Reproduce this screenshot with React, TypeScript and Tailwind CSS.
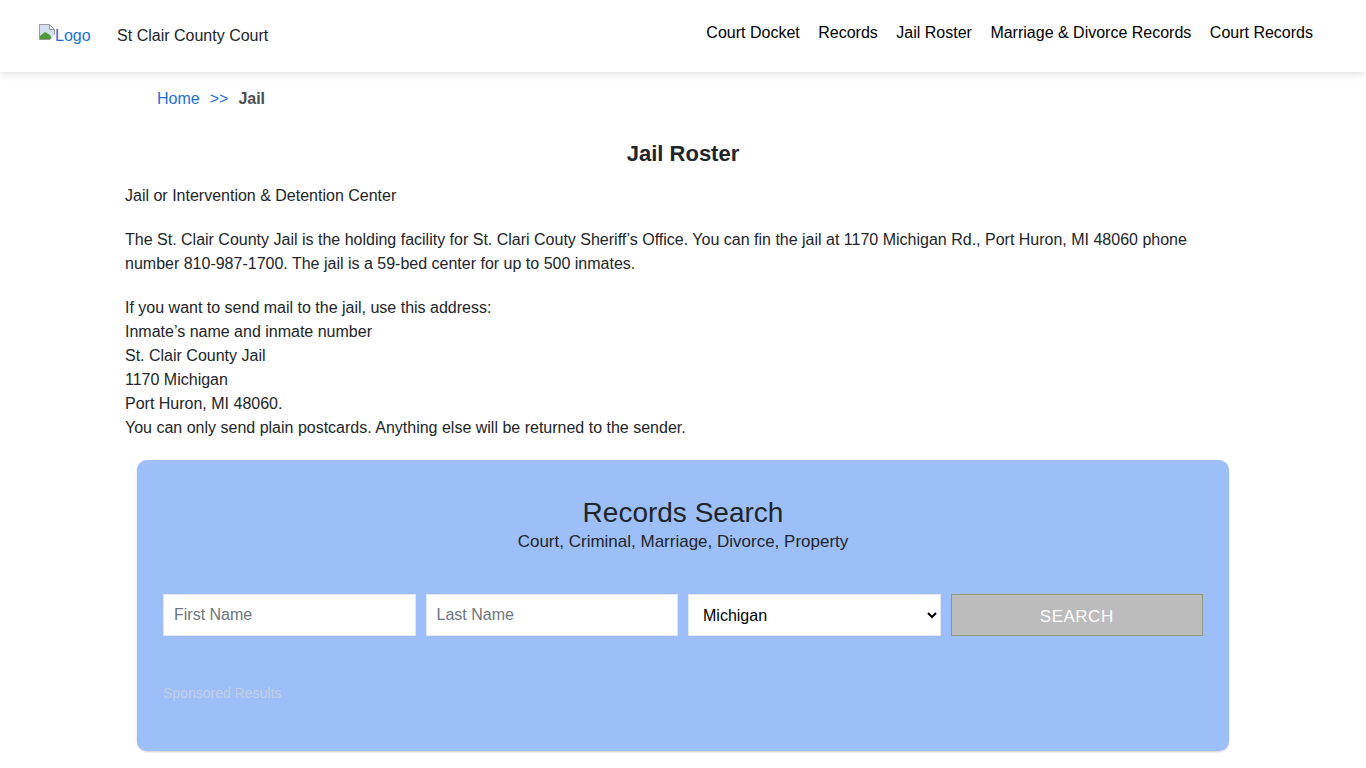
const navLinks = ['Court Docket', 'Records', 'Jail Roster', 'Marriage & Divorce Records', 'Court Records']

const BrokenImage = () => (
  <svg width="16" height="16" viewBox="0 0 16 16" className="shrink-0">
    <path d="M0.5 0.5H10.5L15.5 5.5V15.5H0.5Z" fill="#d3deef" stroke="#9a9a9a" />
    <path d="M10.5 0.5V5.5H15.5Z" fill="#f6f6f6" stroke="#9a9a9a" />
    <path d="M1 15V12L6 8L11 11L13 15Z" fill="#4f9a3c" />
    <path d="M16 10L11 16H16Z" fill="#fff" />
  </svg>
)

export default function App() {
  return (
    <div className="min-h-[768px] bg-white text-[16px] leading-6 text-[#212529] font-['Liberation_Sans',Arial,sans-serif]">
      {/* Header */}
      <header className="flex h-[72px] items-start justify-between pl-[39px] pr-[53px] shadow-[0_2px_8px_rgba(0,0,0,0.13)]">
        <div className="flex items-center pt-[24px]">
          <a href="#" className="flex items-start text-[#1a6fdc]">
            <BrokenImage />
            <span>Logo</span>
          </a>
          <span className="ml-[26.5px]">St Clair County Court</span>
        </div>
        <nav className="flex gap-[18.5px] pt-[21px] text-black">
          {navLinks.map((link) => (
            <a key={link} href="#">{link}</a>
          ))}
        </nav>
      </header>

      {/* Breadcrumb */}
      <div className="flex pl-[157px] pt-[15px]">
        <a href="#" className="text-[#1a6fdc]">Home</a>
        <span className="mx-[10px] text-[#1a6fdc]">&gt;&gt;</span>
        <b className="text-[#4d4d4d]">Jail</b>
      </div>

      <main className="mx-auto w-[1116px] pt-[30px]">
        <h1 className="text-center text-[22px] font-bold leading-[26px]">Jail Roster</h1>

        <p className="mt-[17px]">Jail or Intervention &amp; Detention Center</p>
        <p className="mt-5">
          The St. Clair County Jail is the holding facility for St. Clari Couty Sheriff’s Office. You can fin the jail at 1170 Michigan Rd., Port Huron, MI 48060 phone number 810-987-1700. The jail is a 59-bed center for up to 500 inmates.
        </p>
        <p className="mt-5">
          If you want to send mail to the jail, use this address:<br />
          Inmate’s name and inmate number<br />
          St. Clair County Jail<br />
          1170 Michigan<br />
          Port Huron, MI 48060.<br />
          You can only send plain postcards. Anything else will be returned to the sender.
        </p>

        {/* Search box */}
        <section className="mx-3 mt-5 h-[291px] rounded-[10px] bg-[#9cbff9] px-[26px] pt-[36px] shadow-[0_1px_2px_rgba(0,0,0,0.2)]">
          <h2 className="text-center text-[28px] leading-[34px]">Records Search</h2>
          <p className="text-center text-[17px] leading-[24px]">Court, Criminal, Marriage, Divorce, Property</p>

          <div className="mt-10 grid grid-cols-4 gap-2.5">
            <input
              placeholder="First Name"
              className="h-[42px] min-w-0 border border-[#e2e6ee] bg-white px-[10px] placeholder:text-[#6c757d]"
            />
            <input
              placeholder="Last Name"
              className="h-[42px] min-w-0 border border-[#e2e6ee] bg-white px-[10px] placeholder:text-[#6c757d]"
            />
            <select defaultValue="Michigan" className="h-[42px] min-w-0 border border-[#e2e6ee] bg-white pl-[10px] text-black">
              <option>Michigan</option>
            </select>
            <button className="h-[42px] border border-[#8f9a78] bg-[#bcbcbc] pt-[3px] text-[17px] tracking-[0.5px] text-white">
              SEARCH
            </button>
          </div>

          <p className="mt-[45px] text-[14px] leading-[24px] text-[#c3cfe2]">Sponsored Results</p>
        </section>
      </main>
    </div>
  )
}
